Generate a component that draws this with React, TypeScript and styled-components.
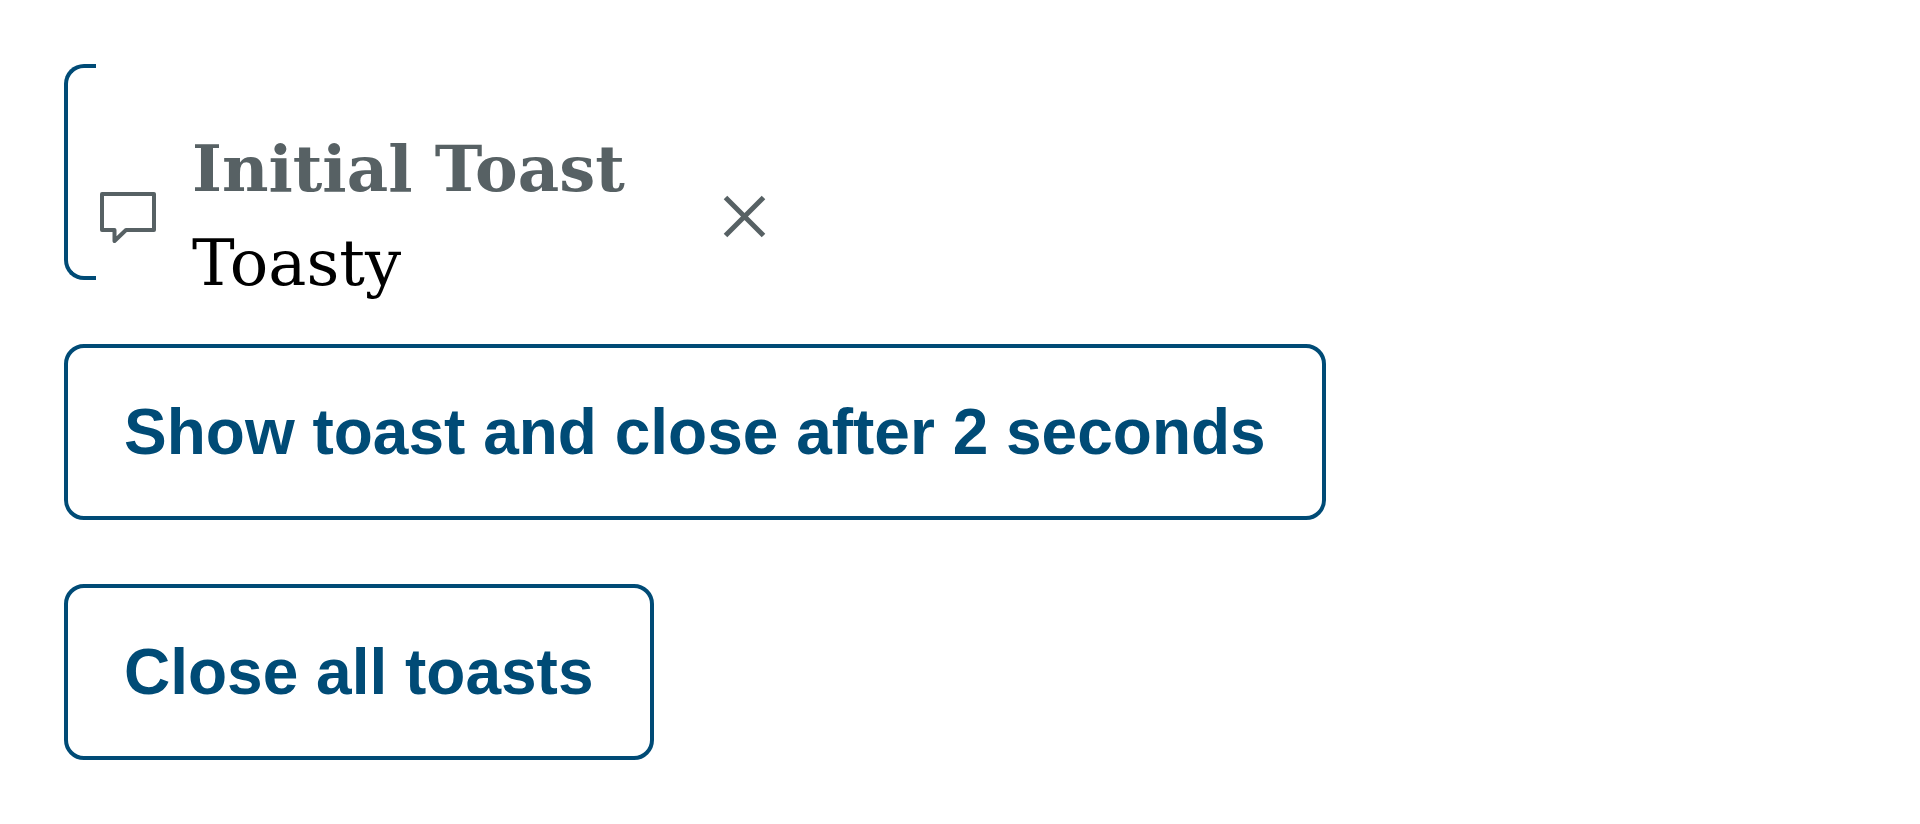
import React from 'react';
import styled, { createGlobalStyle } from 'styled-components';

const GlobalStyle = createGlobalStyle`
  body { margin: 0; background: #fff; }
  * { box-sizing: border-box; }
`;

const Page = styled.main`
  display: flex;
  flex-direction: column;
  align-items: flex-start;
  gap: 64px;
  padding: 64px;
`;

const Toast = styled.section`
  display: flex;
  align-items: center;
  max-width: 100%;
  height: 216px;
`;

const Bracket = styled.span`
  flex: none;
  align-self: stretch;
  width: 32px;
  border: 4px solid #004b76;
  border-right: 0;
  border-radius: 20px 0 0 20px;
`;

const ToastBody = styled.div`
  display: flex;
  align-items: center;
  padding-top: 88px;
`;

const Icon = styled.svg`
  flex: none;
  width: 64px;
  height: 64px;
  fill: none;
  stroke: #576164;
`;

const ToastText = styled.div`
  padding: 0 88px 0 32px;
  font: 64px/94px "DejaVu Serif", serif;
  color: #000;
`;

const Title = styled.strong`
  display: block;
  color: #576164;
`;

const CloseButton = styled.button`
  display: flex;
  padding: 0;
  border: 0;
  background: none;
  cursor: pointer;
`;

const ActionButton = styled.button`
  padding: 48px 56px;
  border: 4px solid #004b76;
  border-radius: 20px;
  background: #fff;
  color: #004b76;
  font: bold 64px/72px "Liberation Sans", Arial, sans-serif;
  cursor: pointer;
`;

export default function App() {
  return (
    <>
      <GlobalStyle />
      <Page>
        <Toast role="status">
          <Bracket />
          <ToastBody>
            <Icon viewBox="0 0 64 64" aria-hidden="true">
              <path d="M6 10H58V46H30L18.5 57V46H6Z" strokeWidth="4" strokeLinejoin="round" />
            </Icon>
            <ToastText>
              <Title>Initial Toast</Title>
              Toasty
            </ToastText>
            <CloseButton aria-label="Close">
              <Icon viewBox="0 0 64 64" aria-hidden="true">
                <path d="M12.5 13.5L50.5 51.5M50.5 13.5L12.5 51.5" strokeWidth="5" />
              </Icon>
            </CloseButton>
          </ToastBody>
        </Toast>
        <ActionButton>Show toast and close after 2 seconds</ActionButton>
        <ActionButton>Close all toasts</ActionButton>
      </Page>
    </>
  );
}
